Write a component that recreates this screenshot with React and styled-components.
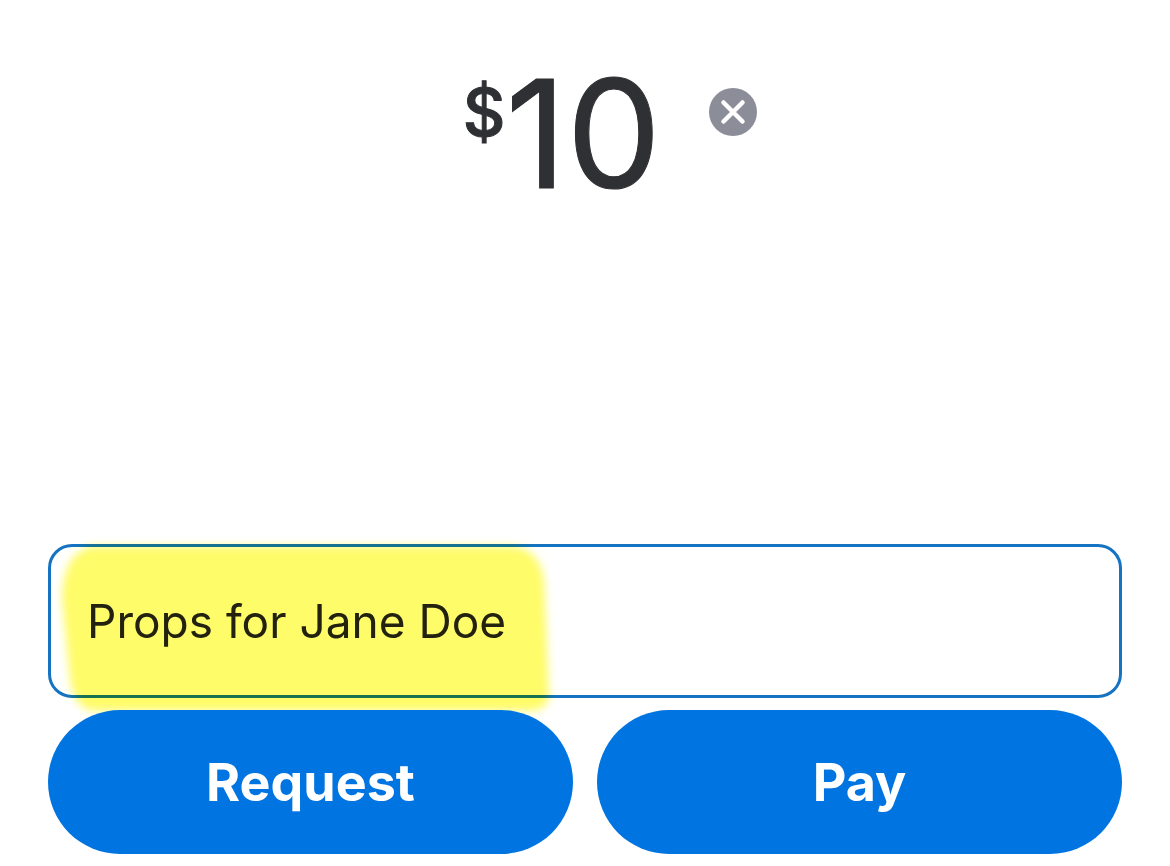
import React, { useState } from "react";
import styled, { createGlobalStyle } from "styled-components";

const GlobalStyle = createGlobalStyle`
  * {
    box-sizing: border-box;
  }

  body {
    margin: 0;
    background-color: #ffffff;
    font-family: Inter, "Liberation Sans", sans-serif;
  }
`;

const Screen = styled.main`
  padding: 64px 48px 12px;
`;

const AmountRow = styled.header`
  display: flex;
  justify-content: center;
  align-items: flex-start;
  height: 480px;
  padding-left: 50px;
`;

const Amount = styled.h1`
  display: flex;
  align-items: flex-start;
  margin: 0;
  color: #2f3033;
  font-size: 150px;
  font-weight: 400;
  line-height: 140px;
  -webkit-text-stroke: 1px #2f3033;
`;

const Currency = styled.span`
  font-size: 66px;
  font-weight: 500;
  line-height: 96px;
`;

const ClearButton = styled.button`
  display: flex;
  justify-content: center;
  align-items: center;
  width: 48px;
  height: 48px;
  margin: 24px 0 0 48px;
  padding: 0;
  border: none;
  border-radius: 50%;
  background-color: #8b8d98;
`;

const NoteField = styled.div`
  position: relative;
  height: 154px;
  margin-bottom: 12px;
`;

const Highlight = styled.svg`
  position: absolute;
  top: 0;
  left: 0;
  overflow: visible;
  pointer-events: none;
  mix-blend-mode: multiply;
`;

const NoteInput = styled.input`
  width: 100%;
  height: 100%;
  padding: 0 36px;
  border: 3px solid #1673c2;
  border-radius: 24px;
  outline: none;
  background-color: #ffffff;
  color: #222222;
  font-family: Inter, "Liberation Sans", sans-serif;
  font-size: 46px;
`;

const Actions = styled.div`
  position: relative;
  display: grid;
  grid-template-columns: 1fr 1fr;
  gap: 24px;
`;

const ActionButton = styled.button`
  height: 144px;
  padding: 0;
  border: none;
  border-radius: 72px;
  background-color: #0074e0;
  color: #ffffff;
  font-family: Inter, "Liberation Sans", sans-serif;
  font-size: 52px;
  font-weight: 700;
`;

const App = () => {
  const [amount, setAmount] = useState("10");
  const [note, setNote] = useState("Props for Jane Doe");

  return (
    <Screen>
      <GlobalStyle />
      <AmountRow>
        <Amount>
          <Currency>$</Currency>
          {amount}
        </Amount>
        <ClearButton aria-label="Clear amount" onClick={() => setAmount("0")}>
          <svg width="48" height="48" viewBox="0 0 48 48" fill="none">
            <path
              d="M14.5 14.5L33.5 33.5M33.5 14.5L14.5 33.5"
              stroke="#ffffff"
              strokeWidth="4.5"
              strokeLinecap="round"
            />
          </svg>
        </ClearButton>
      </AmountRow>
      <NoteField>
        <NoteInput
          aria-label="Note"
          value={note}
          onChange={(e) => setNote(e.target.value)}
        />
        <Highlight width="520" height="166" viewBox="0 0 520 166">
          <defs>
            <filter id="soft" x="-10%" y="-10%" width="120%" height="120%">
              <feGaussianBlur stdDeviation="4" />
            </filter>
          </defs>
          <path
            d="M44 2H464Q492 5 496 36L501 150Q501 167 480 167H44Q26 163 22 136L14 56Q14 9 44 2Z"
            fill="#fffc69"
            filter="url(#soft)"
          />
        </Highlight>
      </NoteField>
      <Actions>
        <ActionButton>Request</ActionButton>
        <ActionButton>Pay</ActionButton>
      </Actions>
    </Screen>
  );
};

export default App;
